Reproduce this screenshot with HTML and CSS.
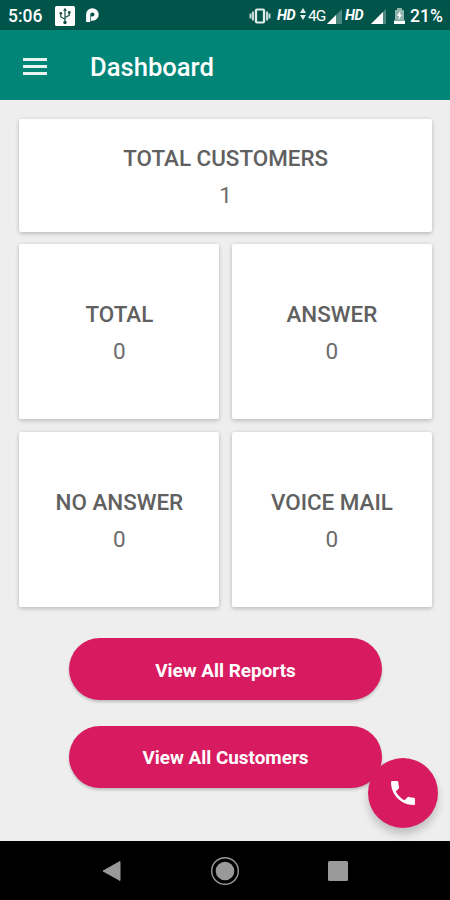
FILE: index.html
```html
<!DOCTYPE html>
<html lang="en">
<head>
<meta charset="utf-8">
<title>Dashboard</title>
<link rel="stylesheet" href="styles.css">
</head>
<body>
<div class="screen">
  <div class="status">
    <span class="time">5:06</span>
    <svg class="usb" width="20" height="20" viewBox="0 0 20 20"><rect width="20" height="20" rx="1.5" fill="#fff"/><g fill="none" stroke="#174f48" stroke-width="1.200"><path d="M10 4v12M10 13.200L5.800 11V7.500M10 11.500l4.200-2.200V6.500"/></g><g fill="#174f48"><path d="M10 1.800l2 3H8z"/><circle cx="10" cy="16.500" r="1.700"/><circle cx="5.800" cy="7.300" r="1.300"/><path d="M13 5.200h2.500v2.500H13z"/></g></svg>
    <svg class="parking" width="13" height="16" viewBox="0 0 13 16"><path d="M2.200 14V6.500a4.200 4.200 0 1 1 4.300 4.200H5" fill="none" stroke="#fff" stroke-width="4.200" stroke-linejoin="round"/></svg>
    <span class="spacer"></span>
    <svg class="vibrate" width="22" height="16" viewBox="0 0 22 16"><rect x="7" y="1.500" width="8" height="13" rx="1" fill="none" stroke="#e4eeec" stroke-width="2.200"/><path d="M4 3.500v9M18 3.500v9" stroke="#c5dad7" stroke-width="2.200"/><path d="M1.500 5.500v5M20.500 5.500v5" stroke="#c5dad7" stroke-width="2"/></svg>
    <span class="hd">HD</span>
    <svg class="arrows" width="6" height="12" viewBox="0 0 6 12"><path d="M3 0l3 5H0zM3 12l3-5H0z" fill="#e4eeec"/></svg>
    <span class="net">4G</span>
    <svg class="signal" width="15" height="15" viewBox="0 0 15 15"><path d="M15 0v15H0z" fill="#4d8880"/><path d="M9 6v9H0z" fill="#fff"/></svg>
    <span class="hd hd-second">HD</span>
    <svg class="signal signal-second" width="15" height="15" viewBox="0 0 15 15"><path d="M15 0v15H0z" fill="#4d8880"/><path d="M12 3v12H0z" fill="#fff"/></svg>
    <svg class="battery" width="11" height="16" viewBox="0 0 11 16"><path d="M3 0h5v2h2v10H1V2h2z" fill="#8fb5af"/><path d="M0 12.500h11V16H0z" fill="#fff"/><path d="M6.500 2.500L3 8h2l-.5 4L8 6.500H6z" fill="#fff"/></svg>
    <span class="percent">21%</span>
  </div>
  <header class="appbar">
    <svg width="24" height="17" viewBox="0 0 24 17"><path d="M0 1.500h24M0 8.500h24M0 15.500h24" stroke="#e6f3f1" stroke-width="2.800"/></svg>
    <h1>Dashboard</h1>
  </header>
  <main>
    <div class="cards">
      <section class="card wide"><h2>TOTAL CUSTOMERS</h2><p>1</p></section>
      <section class="card"><h2>TOTAL</h2><p>0</p></section>
      <section class="card"><h2>ANSWER</h2><p>0</p></section>
      <section class="card"><h2>NO ANSWER</h2><p>0</p></section>
      <section class="card"><h2>VOICE MAIL</h2><p>0</p></section>
    </div>
    <div class="actions">
      <button>View All Reports</button>
      <button>View All Customers</button>
    </div>
    <button class="fab" aria-label="Call"><svg width="32" height="32" viewBox="0 0 24 24"><path fill="#fff" d="M6.620 10.790c1.440 2.830 3.760 5.140 6.590 6.590l2.200-2.200c.270-.270.670-.360 1.020-.240 1.120.370 2.330.570 3.570.570.550 0 1 .450 1 1V20c0 .550-.450 1-1 1-9.390 0-17-7.610-17-17 0-.550.450-1 1-1h3.500c.550 0 1 .450 1 1 0 1.250.200 2.450.570 3.570.110.350.030.740-.250 1.020z"/></svg></button>
  </main>
  <nav class="nav">
    <svg width="20" height="22" viewBox="0 0 20 22"><path d="M1 11L18 1.500v19z" fill="#999" stroke="#999" stroke-linejoin="round"/></svg>
    <svg width="30" height="30" viewBox="0 0 30 30"><circle cx="15" cy="15" r="13.300" fill="none" stroke="#999" stroke-width="1.400"/><circle cx="15" cy="15" r="9.300" fill="#999"/></svg>
    <svg width="20" height="20" viewBox="0 0 20 20"><rect width="20" height="20" rx="1.500" fill="#999"/></svg>
  </nav>
</div>
</body>
</html>
```
FILE: styles.css
```css
* { box-sizing: border-box; }
body { margin: 0; font-family: Roboto, sans-serif; background: #eee; }
.screen { width: 450px; height: 900px; display: flex; flex-direction: column; overflow: hidden; }
svg { display: block; flex: none; }
h1, h2, p { margin: 0; }

.status { height: 30px; flex: none; background: #00544a; color: #fff; display: flex; align-items: center; padding: 1px 6px 0 8px; white-space: nowrap; }
.time { width: 47px; font-size: 17.5px; font-weight: 500; }
.parking { margin-left: 11px; }
.spacer { flex: 1; }
.hd { width: 19px; margin-left: 6px; font-size: 14.5px; font-weight: 700; font-style: italic; letter-spacing: -0.5px; }
.arrows { margin: -4px 0 0 4px; }
.net { width: 17px; margin-left: 2px; font-size: 15.5px; letter-spacing: -1px; }
.signal { margin: 1px 0 0 2px; }
.hd-second { margin-left: 3px; }
.signal-second { margin-left: 7px; }
.battery { margin-left: 8px; }
.percent { width: 34px; margin-left: 5px; font-size: 17.5px; font-weight: 500; }

.appbar { height: 70px; flex: none; display: flex; align-items: center; padding: 4px 0 0 23px; background: #008577; color: #fff; }
.appbar svg { margin-top: -2px; }
.appbar h1 { margin-left: 43px; font-size: 25.6px; line-height: 30px; font-weight: 500; }

main { flex: 1; position: relative; padding-top: 19px; }
.cards { display: grid; grid-template-columns: 200px 200px; grid-template-rows: 112.5px 175px 175px; gap: 12.5px; padding-left: 19.400px; }
.card { background: #fff; border-radius: 2px; box-shadow: 0 2px 4px rgba(0,0,0,.17), 0 0 4px rgba(0,0,0,.08); color: #606060; display: flex; flex-direction: column; align-items: center; justify-content: center; gap: 7px; padding-top: 2px; }
.wide { grid-column: span 2; }
.card h2 { font-size: 22.4px; line-height: 30px; font-weight: 500; }
.card p { font-size: 22.5px; line-height: 30px; font-weight: 400; color: #6c6c6c; }
.actions { display: flex; flex-direction: column; gap: 25.5px; padding: 31.5px 0 0 69px; }
button { border: 0; margin: 0; padding: 0; color: #fff; background: #d81b60; font-family: inherit; }
.actions button { width: 313px; height: 62px; border-radius: 31px; padding-top: 2px; font-size: 18.9px; font-weight: 700; box-shadow: 0 2px 3px rgba(0,0,0,.2); }
.fab { position: absolute; right: 12px; bottom: 13px; width: 70px; height: 70px; border-radius: 50%; display: flex; align-items: center; justify-content: center; box-shadow: 0 6px 8px rgba(0,0,0,.2); }

.nav { height: 59px; flex: none; background: #000; display: flex; align-items: center; justify-content: space-between; padding: 0 102px; }
```
